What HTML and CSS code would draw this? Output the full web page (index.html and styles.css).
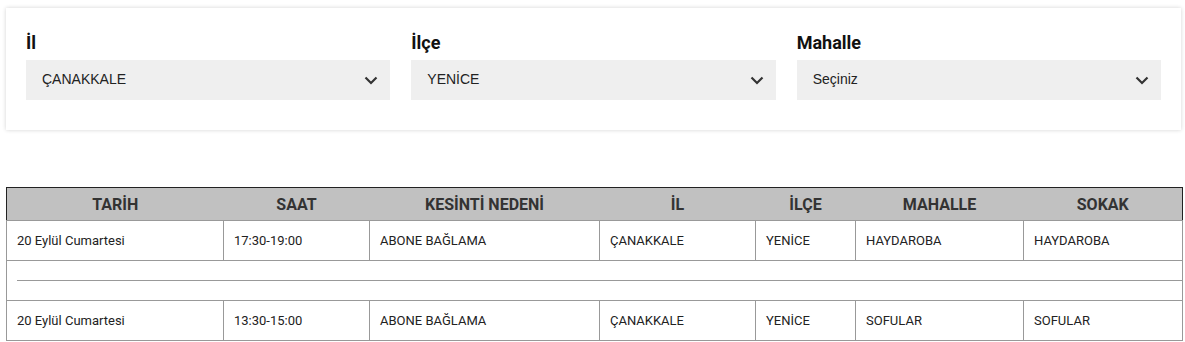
FILE: index.html
```html
<!DOCTYPE html>
<html lang="tr">
<head>
<meta charset="utf-8">
<link rel="stylesheet" href="styles.css">
</head>
<body>
<div class="card">
  <div class="field">
    <div class="label">İl</div>
    <div class="select"><span>ÇANAKKALE</span><svg class="chev" width="14" height="9" viewBox="0 0 14 9"><path d="M1.5 1.5 L7 7 L12.5 1.5" fill="none" stroke="#333" stroke-width="2.2"/></svg></div>
  </div>
  <div class="field">
    <div class="label">İlçe</div>
    <div class="select"><span>YENİCE</span><svg class="chev" width="14" height="9" viewBox="0 0 14 9"><path d="M1.5 1.5 L7 7 L12.5 1.5" fill="none" stroke="#333" stroke-width="2.2"/></svg></div>
  </div>
  <div class="field">
    <div class="label">Mahalle</div>
    <div class="select"><span>Seçiniz</span><svg class="chev" width="14" height="9" viewBox="0 0 14 9"><path d="M1.5 1.5 L7 7 L12.5 1.5" fill="none" stroke="#333" stroke-width="2.2"/></svg></div>
  </div>
</div>
<table class="tbl">
  <colgroup>
    <col class="c1"><col class="c2"><col class="c3"><col class="c4"><col class="c5"><col class="c6"><col class="c7">
  </colgroup>
  <thead>
    <tr><th>TARİH</th><th>SAAT</th><th>KESİNTİ NEDENİ</th><th>İL</th><th>İLÇE</th><th>MAHALLE</th><th>SOKAK</th></tr>
  </thead>
  <tbody>
    <tr><td>20 Eylül Cumartesi</td><td>17:30-19:00</td><td>ABONE BAĞLAMA</td><td>ÇANAKKALE</td><td>YENİCE</td><td>HAYDAROBA</td><td>HAYDAROBA</td></tr>
    <tr class="sep"><td colspan="7"><div class="rule"></div></td></tr>
    <tr><td>20 Eylül Cumartesi</td><td>13:30-15:00</td><td>ABONE BAĞLAMA</td><td>ÇANAKKALE</td><td>YENİCE</td><td>SOFULAR</td><td>SOFULAR</td></tr>
  </tbody>
</table>
</body>
</html>
```
FILE: styles.css
```css
html, body { margin: 0; padding: 0; background: #fff; }
body { padding: 8px 3px 0 6px; font-family: Roboto, "Liberation Sans", sans-serif; color: #222; }
.card {
  width: 1175px;
  box-sizing: border-box;
  background: #fff;
  box-shadow: 0 0 4px rgba(0,0,0,0.18);
  padding: 24px 20px 30px 20px;
  display: grid;
  grid-template-columns: 1fr 1fr 1fr;
  column-gap: 21px;
}
.label {
  font-family: Roboto, sans-serif;
  font-weight: 700;
  font-size: 18px;
  line-height: 21px;
  color: #111;
  margin-bottom: 7px;
}
.select {
  height: 40px;
  background: #efefef;
  display: flex;
  align-items: center;
  justify-content: space-between;
  padding: 0 12px 0 16px;
  font-family: "Liberation Sans", Arial, sans-serif;
  font-size: 14px;
  color: #222;
}
.select span { position: relative; top: -1px; }
.chev { display: block; }
.tbl {
  margin-top: 57px;
  width: 1176px;
  border-collapse: collapse;
  table-layout: fixed;
}
.c1 { width: 217px; } .c2 { width: 146px; } .c3 { width: 230px; } .c4 { width: 156px; }
.c5 { width: 100px; } .c6 { width: 168px; } .c7 { width: 159px; }
.tbl th {
  background: #c1c1c1;
  height: 32px;
  padding: 0;
  font-family: Roboto, sans-serif;
  font-weight: 700;
  font-size: 16px;
  color: #333;
  text-align: center;
  border-top: 1px solid #222;
  border-bottom: 1px solid #999;
}
.tbl th:first-child { border-left: 1px solid #222; }
.tbl th:last-child { border-right: 1px solid #222; }
.tbl td {
  height: 39px;
  padding: 0 0 0 10px;
  font-size: 13px;
  color: #222;
  border: 1px solid #999;
  white-space: nowrap;
  overflow: hidden;
}
.tbl tr.sep td { padding: 0 0 0 10px; }
.rule { height: 1px; background: #999; }
```
